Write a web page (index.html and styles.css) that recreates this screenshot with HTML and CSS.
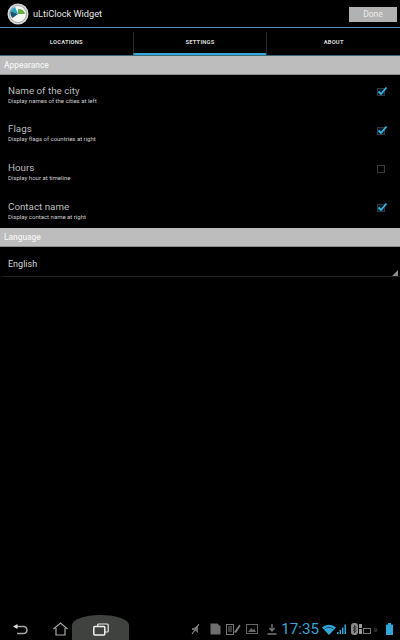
FILE: index.html
```html
<!DOCTYPE html>
<html>
<head>
  <title>uLtiClock Widget</title>
  <link rel="stylesheet" href="styles.css">
</head>
<body>
  <div class="topbar">
    <svg class="logo" width="22" height="22" viewBox="0 0 22 22">
      <circle cx="11" cy="11" r="10.5" fill="#d8d8d8"/>
      <circle cx="11" cy="11" r="8.5" fill="#f4f6f2" stroke="#777" stroke-width="0.6"/>
      <path d="M11 11L3.5 8A8 8 0 0 1 8 4Z" fill="#2aa5c8"/>
      <path d="M11 11L5.5 15A8 8 0 0 1 3.5 8Z" fill="#16586e"/>
      <path d="M11 11L11 6A6 6 0 0 1 18 11Z" fill="#66ae45"/>
    </svg>
    <span class="app-title">uLtiClock Widget</span>
    <button class="done">Done</button>
  </div>

  <div class="tabs">
    <div class="tab">LOCATIONS</div>
    <div class="tab selected">SETTINGS</div>
    <div class="tab">ABOUT</div>
  </div>

  <div class="section">Appearance</div>
  <div class="rows">
    <div class="row">
      <div>
        <div class="name">Name of the city</div>
        <div class="desc">Display names of the cities at left</div>
      </div>
      <span class="check on"><svg width="11" height="10" viewBox="0 0 11 10"><path d="M1.5 5.5L4 8L9.5 1.5" fill="none" stroke="#35b5e5" stroke-width="1.8"/></svg></span>
    </div>
    <div class="row">
      <div>
        <div class="name">Flags</div>
        <div class="desc">Display flags of countries at right</div>
      </div>
      <span class="check on"><svg width="11" height="10" viewBox="0 0 11 10"><path d="M1.5 5.5L4 8L9.5 1.5" fill="none" stroke="#35b5e5" stroke-width="1.8"/></svg></span>
    </div>
    <div class="row">
      <div>
        <div class="name">Hours</div>
        <div class="desc">Display hour at timeline</div>
      </div>
      <span class="check"></span>
    </div>
    <div class="row">
      <div>
        <div class="name">Contact name</div>
        <div class="desc">Display contact name at right</div>
      </div>
      <span class="check on"><svg width="11" height="10" viewBox="0 0 11 10"><path d="M1.5 5.5L4 8L9.5 1.5" fill="none" stroke="#35b5e5" stroke-width="1.8"/></svg></span>
    </div>
  </div>

  <div class="section">Language</div>
  <div class="spinner">English</div>

  <div class="navbar">
    <div class="glow"></div>
    <svg class="nav-back" width="15" height="11" viewBox="0 0 15 11"><path d="M4 2.5H10.5A3.5 3.5 0 0 1 10.5 9.5H4" fill="none" stroke="#a8a8a8" stroke-width="1.5"/><path d="M0 2.5L4.5 0V5Z" fill="#dcdcdc"/></svg>
    <svg class="nav-home" width="15" height="14" viewBox="0 0 15 14"><path d="M0.5 7L7.5 1L14.5 7M3 6V13H12V6" fill="none" stroke="#a8a8a8" stroke-width="1.2"/></svg>
    <svg class="nav-recent" width="16" height="13" viewBox="0 0 16 13"><rect x="4.7" y="1" width="10.5" height="8" rx="1" fill="none" stroke="#e8e8e8" stroke-width="1.2"/><rect x="0.8" y="3.5" width="11" height="8.5" rx="1" fill="#3f423f" stroke="#f2f2f2" stroke-width="1.5"/></svg>

    <div class="status">
      <svg class="st-mute" width="9" height="12" viewBox="0 0 9 12"><path d="M1 5H3L7 2V10L3 7H1Z" fill="#666"/><path d="M1 11L8 1" stroke="#888" stroke-width="1.1"/></svg>
      <svg class="st-sd" width="11" height="12" viewBox="0 0 11 12"><path d="M0.5 0.5H7.5L10.5 3.5V11.5H0.5Z" fill="#6e6e6e"/></svg>
      <svg class="st-doc" width="15" height="12" viewBox="0 0 15 12"><rect x="0.5" y="1.5" width="7" height="10" fill="none" stroke="#777"/><path d="M2 4H6M2 6H6M2 8H6" stroke="#777"/><path d="M8 9L13.5 1.5L14.5 3L10 10Z" fill="#808080"/></svg>
      <svg class="st-img" width="12" height="10" viewBox="0 0 12 10"><rect x="0.5" y="0.5" width="11" height="9" fill="none" stroke="#666"/><path d="M2 8L5 4L7 6L8.5 5L10 8Z" fill="#666"/></svg>
      <svg class="st-dl" width="10" height="11" viewBox="0 0 10 11"><path d="M5 0V6M2.5 4L5 7L7.5 4M0.5 10H9.5" fill="none" stroke="#777" stroke-width="1.3"/></svg>
      <span class="clock">17:35</span>
      <svg class="st-wifi" width="14" height="11" viewBox="0 0 14 11"><path d="M0 3.5A10 10 0 0 1 14 3.5L7 11Z" fill="#33a5d6"/><path d="M2.5 5A7 7 0 0 1 11.5 5" fill="none" stroke="#0c3a50" stroke-width="0.8"/></svg>
      <svg class="st-signal" width="9" height="10" viewBox="0 0 9 10"><path d="M0 8H1.5V10H0ZM2.5 6H4V10H2.5ZM5 3.5H6.5V10H5ZM7.5 0.5H9V10H7.5Z" fill="#33a5d6"/></svg>
      <svg class="st-bt" width="7" height="12" viewBox="0 0 7 12"><rect x="0" y="0" width="7" height="12" rx="3" fill="#8a8a8a"/><path d="M3.5 2V10M2 4L5 7.5L3.5 9.5M2 8L5 4.5L3.5 2.5" fill="none" stroke="#222" stroke-width="0.8"/></svg>
      <svg class="st-dock" width="12" height="10" viewBox="0 0 12 10"><rect x="0" y="0" width="3" height="4" fill="#999"/><rect x="0" y="5" width="3" height="5" fill="#999"/><rect x="4.5" y="4.5" width="7" height="5" fill="none" stroke="#777"/></svg>
      <span class="more">»</span>
      <svg class="st-batt" width="7" height="12" viewBox="0 0 7 12"><rect x="2" y="0" width="3" height="2" fill="#33a5d6"/><rect x="0" y="1.5" width="7" height="10.5" rx="0.5" fill="#33a5d6"/></svg>
    </div>
  </div>
</body>
</html>
```

FILE: styles.css
```css
html, body {
  height: 100%;
  margin: 0;
  background: #000;
}

body {
  display: flex;
  flex-direction: column;
  font-family: "Roboto", "Liberation Sans", sans-serif;
  color: #cfcfcf;
  overflow: hidden;
}

.topbar {
  display: flex;
  align-items: center;
  height: 27px;
  padding: 0 3px 0 7px;
  border-bottom: 1px solid #5e90b8;
}

.logo {
  margin-right: 4px;
}

.app-title {
  flex: 1;
  font-size: 9.2px;
  color: #e4e4e4;
}

.done {
  width: 48px;
  height: 15px;
  margin: 1px 0 0;
  padding: 0;
  border: 0;
  background: #b2b2b2;
  color: #ececec;
  font: 8.5px "Roboto", sans-serif;
}

.tabs {
  display: flex;
  height: 27px;
  border-bottom: 1px solid #3d6a7a;
}

.tab {
  flex: 1;
  display: flex;
  align-items: center;
  justify-content: center;
  margin-top: 4px;
  padding-bottom: 4px;
  font-size: 5.8px;
  font-weight: bold;
  letter-spacing: 0.2px;
  color: #d8d8d8;
  border-left: 1px solid #2a2a2a;
}

.tab:first-child {
  border-left: 0;
}

.tab.selected {
  border-bottom: 2px solid #35a9d5;
  padding-bottom: 2px;
}

.section {
  display: flex;
  align-items: center;
  height: 18px;
  padding-left: 4px;
  font-size: 8.4px;
  font-weight: 500;
  color: #f2f2f2;
  background: #bdbdbd;
  border-bottom: 1px solid #8d8d8d;
}

.rows {
  height: 153px;
}

.row {
  display: flex;
  align-items: center;
  justify-content: space-between;
  height: 38.6px;
  padding: 0 15px 0 8px;
}

.name {
  font-size: 9.8px;
  line-height: 13px;
  color: #bcbcbc;
}

.desc {
  font-size: 6px;
  line-height: 8px;
  color: #cdcdcd;
}

.check {
  position: relative;
  box-sizing: border-box;
  width: 8px;
  height: 8px;
  margin-bottom: 4px;
  border: 1px solid #3a3a3a;
}

.check.on {
  border-color: #2a3a44;
  background: #0c1a22;
}

.check svg {
  position: absolute;
  left: -1px;
  top: -3px;
}

.spinner {
  position: relative;
  height: 29px;
  line-height: 34px;
  margin-left: 2px;
  padding-left: 6px;
  font-size: 9px;
  color: #d6d6d6;
  border-bottom: 1px solid #222;
}

.spinner::after {
  content: "";
  position: absolute;
  right: 2px;
  bottom: 0;
  border-left: 6px solid transparent;
  border-bottom: 6px solid #8a8a8a;
}

.navbar {
  position: relative;
  display: flex;
  align-items: center;
  height: 25px;
  margin-top: auto;
  padding: 3px 7px 0 13px;
  box-sizing: border-box;
}

.glow {
  position: absolute;
  left: 72px;
  bottom: 0;
  width: 57px;
  height: 25px;
  border-radius: 28px 28px 0 0 / 10px 10px 0 0;
  background: #3f423f;
}

.navbar svg {
  position: relative;
}

.nav-back {
  margin-right: 25px;
}

.nav-home {
  margin-right: 25px;
}

.status {
  display: flex;
  align-items: center;
  margin-left: auto;
}

.st-sd {
  margin-left: 10px;
}

.st-doc, .st-img {
  margin-left: 5px;
}

.st-dl {
  margin-left: 9px;
}

.clock {
  margin: 0 3px 0 4px;
  font-size: 15.2px;
  color: #3aa3d4;
}

.st-signal {
  margin-left: 1px;
}

.st-bt {
  margin-left: 5px;
}

.st-dock {
  margin-left: 1px;
}

.more {
  width: 7px;
  margin-left: 2px;
  font-size: 10px;
  color: #4a4a4a;
}

.st-batt {
  margin-left: 6px;
}
```
